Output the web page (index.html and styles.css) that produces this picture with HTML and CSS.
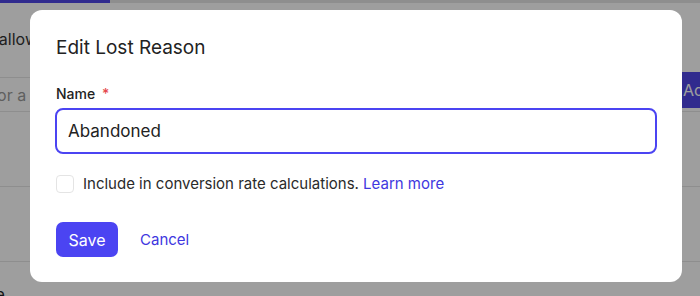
FILE: index.html
```html
<!DOCTYPE html>
<html lang="en">
<head>
    <meta charset="UTF-8">
    <meta name="viewport" content="width=device-width, initial-scale=1.0">
    <title>Edit Lost Reason</title>
    <link rel="stylesheet" href="styles.css">
</head>
<body>
    <div class="page">
        <div class="tabs"><span class="tab-active"></span></div>
        <div class="hint"><span>Sellers can choose to allow</span></div>
        <div class="add-row">
            <input type="text" class="add-input" placeholder="Search for a lost reason">
            <button class="add-btn">Add</button>
        </div>
        <div class="list-row"></div>
        <div class="list-row"></div>
        <div class="list-row last">Price</div>
    </div>

    <div class="overlay">
        <div class="modal">
            <h2 class="modal-title">Edit Lost Reason</h2>
            <div class="field">
                <label for="reasonName">Name <span class="req">*</span></label>
                <input type="text" id="reasonName" class="field-input" value="Abandoned">
            </div>
            <label class="check-row">
                <span class="checkbox"></span>
                <span>Include in conversion rate calculations. <a href="#" class="link">Learn more</a></span>
            </label>
            <div class="actions">
                <button class="btn-save">Save</button>
                <a href="#" class="link cancel">Cancel</a>
            </div>
        </div>
    </div>
</body>
</html>
```

FILE: styles.css
```css
html, body {
    overflow: hidden;
}
body {
    margin: 0;
    font-family: Inter, 'Noto Sans', sans-serif;
    background: #ffffff;
    color: #222;
    width: 700px;
    height: 296px;
}
.page {
    height: 296px;
}
.tabs {
    height: 3px;
    background: #e6e6e6;
}
.tab-active {
    display: block;
    width: 110px;
    height: 3px;
    background: #4f46e5;
}
.hint {
    display: flex;
    justify-content: flex-end;
    width: 38px;
    height: 74px;
    box-sizing: border-box;
    padding-top: 26px;
    font-size: 16px;
    color: #333;
    white-space: nowrap;
}
.add-row {
    display: flex;
    height: 33px;
    border-top: 1px solid #e5e5e5;
    border-bottom: 1px solid #e5e5e5;
}
.add-input {
    flex: 1;
    border: none;
    padding: 0;
    text-indent: -66px;
    font-family: inherit;
    font-size: 16px;
    background: transparent;
    outline: none;
}
.add-input::placeholder {
    color: #9a9a9a;
}
.add-btn {
    flex-shrink: 0;
    width: 30px;
    height: 36px;
    margin-top: -6px;
    padding: 0 0 0 13px;
    background: #4f46e5;
    color: #fff;
    border: none;
    font-family: inherit;
    font-size: 16px;
    text-align: left;
    white-space: nowrap;
    overflow: hidden;
}
.list-row {
    height: 74px;
    border-bottom: 1px solid #e5e5e5;
}
.list-row:first-of-type {
    height: 72px;
}
.list-row.last {
    height: auto;
    border-bottom: none;
    padding-top: 22px;
    margin-left: -34px;
    font-size: 16px;
}
.overlay {
    position: fixed;
    inset: 0;
    background: rgba(0, 0, 0, 0.38);
}
.modal {
    margin: 10px 0 0 30px;
    width: 652px;
    height: 272px;
    box-sizing: border-box;
    padding: 26px 26px 0 26px;
    background: #fff;
    border-radius: 12px;
}
.modal-title {
    margin: 0;
    font-size: 19px;
    font-weight: 400;
    line-height: 24px;
    color: #222;
}
.field {
    margin-top: 25px;
}
.field label {
    display: block;
    font-size: 14px;
    font-weight: 500;
    line-height: 17px;
    color: #222;
    margin-bottom: 6px;
}
.req {
    color: #e5484d;
    margin-left: 3px;
}
.field-input {
    display: block;
    width: 602px;
    height: 46px;
    box-sizing: border-box;
    margin-left: -1px;
    padding: 0 11px;
    border: 2px solid #4b44f2;
    border-radius: 8px;
    font-family: inherit;
    font-size: 17px;
    color: #222;
    outline: none;
}
.check-row {
    display: flex;
    align-items: center;
    gap: 9px;
    margin-top: 20px;
    font-size: 15px;
    line-height: 20px;
    color: #2a2a2a;
}
.checkbox {
    width: 16px;
    height: 16px;
    border: 1px solid #e4e4e4;
    border-radius: 4px;
    flex-shrink: 0;
}
.link {
    color: #4037e0;
    text-decoration: none;
}
.actions {
    display: flex;
    align-items: center;
    gap: 22px;
    margin-top: 28px;
}
.btn-save {
    width: 62px;
    height: 35px;
    background: #4b44f2;
    color: #fff;
    border: none;
    border-radius: 7px;
    font-family: inherit;
    font-size: 16px;
    cursor: pointer;
}
.cancel {
    font-size: 15px;
}
```
